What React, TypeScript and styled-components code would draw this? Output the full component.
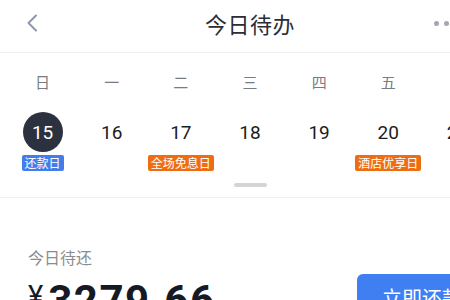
import React from "react";
import styled, { createGlobalStyle } from "styled-components";

const GlobalStyle = createGlobalStyle`
  html, body {
    margin: 0;
    padding: 0;
    background: #ffffff;
    overflow: hidden;
  }
  body {
    font-family: "Noto Sans CJK SC", "Noto Sans", Roboto, sans-serif;
  }
`;

const Screen = styled.div`
  width: 500px;
  background: #ffffff;
`;

const Header = styled.div`
  height: 46px;
  padding-bottom: 6px;
  border-bottom: 1px solid #f1f1f3;
  display: grid;
  grid-template-columns: 80px 1fr 80px;
  align-items: center;
`;

const BackButton = styled.div`
  padding-left: 26px;
  display: flex;
  align-items: center;
`;

const Title = styled.div`
  text-align: center;
  font-size: 22px;
  color: #2b2e36;
  letter-spacing: 0.5px;
`;

const MoreDots = styled.div`
  display: flex;
  gap: 5px;
  padding-left: 14px;
  align-items: center;
`;

const Dot = styled.span`
  width: 5px;
  height: 5px;
  border-radius: 50%;
  background: #a4a7ad;
`;

const Calendar = styled.div`
  padding: 0 8px;
`;

const WeekRow = styled.div`
  display: grid;
  grid-template-columns: repeat(7, 1fr);
  height: 56px;
  align-items: center;
`;

const WeekLabel = styled.div`
  text-align: center;
  font-size: 15px;
  color: #7a7c80;
`;

const DateRow = styled.div`
  display: grid;
  grid-template-columns: repeat(7, 1fr);
  padding-top: 3px;
`;

const DateCell = styled.div`
  display: flex;
  flex-direction: column;
  align-items: center;
`;

const DateNum = styled.div<{ $active?: boolean }>`
  width: 40px;
  height: 40px;
  border-radius: 50%;
  display: flex;
  align-items: center;
  justify-content: center;
  font-family: Roboto, "Noto Sans", sans-serif;
  font-size: 19px;
  color: ${(p) => (p.$active ? "#ffffff" : "#1c1d21")};
  background: ${(p) => (p.$active ? "#2c3140" : "transparent")};
`;

const Tag = styled.div<{ $color: string }>`
  margin-top: 3px;
  height: 16px;
  line-height: 16px;
  padding: 0 3px;
  border-radius: 2px;
  font-size: 12px;
  color: #ffffff;
  background: ${(p) => p.$color};
  white-space: nowrap;
`;

const TagSpace = styled.div`
  height: 19px;
`;

const HandleWrap = styled.div`
  display: flex;
  justify-content: center;
  padding: 12px 0 10px;
  border-bottom: 1px solid #f0f0f2;
`;

const Handle = styled.div`
  width: 33px;
  height: 4px;
  border-radius: 2px;
  background: #d4d4d6;
`;

const Summary = styled.div`
  display: flex;
  justify-content: space-between;
  align-items: flex-start;
  padding: 48px 13px 0 28px;
`;

const AmountBlock = styled.div`
  display: flex;
  flex-direction: column;
`;

const Label = styled.div`
  font-size: 16px;
  line-height: 22px;
  color: #8a8c90;
`;

const Amount = styled.div`
  margin-top: 12px;
  display: flex;
  align-items: flex-start;
  font-family: Roboto, "Noto Sans", sans-serif;
  line-height: 1;
  color: #161a24;
`;

const Yen = styled.span`
  margin-top: 2px;
  font-size: 29px;
  margin-right: 5px;
`;

const Digits = styled.span`
  font-size: 42px;
  font-weight: 700;
  letter-spacing: 1.5px;
`;

const PayButton = styled.button`
  margin-top: 28px;
  height: 46px;
  padding: 0 25px;
  border: none;
  border-radius: 6px;
  background: #3f7ff2;
  color: #ffffff;
  font-family: "Noto Sans CJK SC", sans-serif;
  font-size: 20px;
`;

interface Day {
  num: number;
  week: string;
  tag?: string;
  color?: string;
  active?: boolean;
}

const days: Array<Day> = [
  { num: 15, week: "日", tag: "还款日", color: "#437de9", active: true },
  { num: 16, week: "一" },
  { num: 17, week: "二", tag: "全场免息日", color: "#ef6d12" },
  { num: 18, week: "三" },
  { num: 19, week: "四" },
  { num: 20, week: "五", tag: "酒店优享日", color: "#ef6d12" },
  { num: 21, week: "六" },
];

const App = () => {
  return (
    <Screen>
      <GlobalStyle />
      <Header>
        <BackButton>
          <svg width="12" height="18" viewBox="0 0 12 18">
            <path d="M10 1.5 L2.5 9 L10 16.5" fill="none" stroke="#8e97aa" strokeWidth="2" strokeLinecap="round" strokeLinejoin="round" />
          </svg>
        </BackButton>
        <Title>今日待办</Title>
        <MoreDots>
          <Dot />
          <Dot />
          <Dot />
        </MoreDots>
      </Header>

      <Calendar>
        <WeekRow>
          {days.map((d) => (
            <WeekLabel key={d.week}>{d.week}</WeekLabel>
          ))}
        </WeekRow>
        <DateRow>
          {days.map((d) => (
            <DateCell key={d.num}>
              <DateNum $active={d.active}>{d.num}</DateNum>
              {d.tag ? <Tag $color={d.color || "#437de9"}>{d.tag}</Tag> : <TagSpace />}
            </DateCell>
          ))}
        </DateRow>
      </Calendar>
      <HandleWrap>
        <Handle />
      </HandleWrap>

      <Summary>
        <AmountBlock>
          <Label>今日待还</Label>
          <Amount>
            <Yen>¥</Yen>
            <Digits>3279.66</Digits>
          </Amount>
        </AmountBlock>
        <PayButton>立即还款</PayButton>
      </Summary>
    </Screen>
  );
};

export default App;
